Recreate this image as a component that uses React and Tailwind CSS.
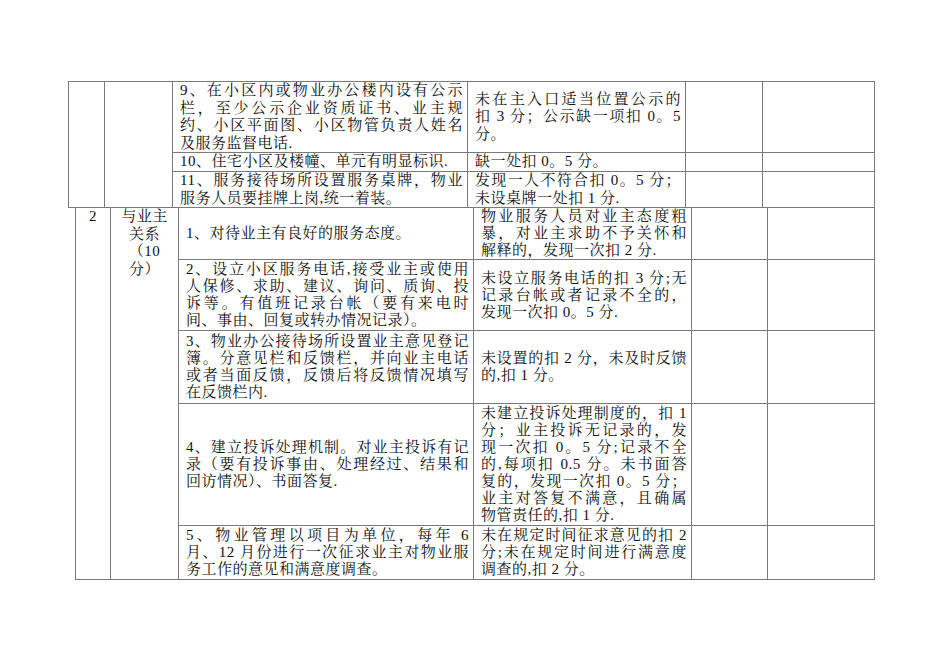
import React from "react";

const FONT = {
  fontFamily: '"Liberation Serif", "Noto Serif CJK SC", "Noto Sans CJK SC", serif',
};

const top = [
  {
    h: "h-[71px]",
    mid: [
      "9、在小区内或物业办公楼内设有公示",
      "栏，至少公示企业资质证书、业主规",
      "约、小区平面图、小区物管负责人姓名",
      "及服务监督电话.",
    ],
    right: ["未在主入口适当位置公示的", "扣 3 分；公示缺一项扣 0。5", "分。"],
  },
  {
    h: "h-[18px]",
    mid: ["10、住宅小区及楼幢、单元有明显标识."],
    right: ["缺一处扣 0。5 分。"],
  },
  {
    h: "h-[36px]",
    mid: ["11、服务接待场所设置服务桌牌，物业", "服务人员要挂牌上岗,统一着装。"],
    right: ["发现一人不符合扣 0。5 分；", "未设桌牌一处扣 1 分."],
  },
];

const bottom = [
  {
    h: "h-[52px]",
    mid: ["1、对待业主有良好的服务态度。"],
    right: ["物业服务人员对业主态度粗", "暴，对业主求助不予关怀和", "解释的，发现一次扣 2 分."],
  },
  {
    h: "h-[71px]",
    mid: [
      "2、设立小区服务电话,接受业主或使用",
      "人保修、求助、建议、询问、质询、投",
      "诉等。有值班记录台帐（要有来电时",
      "间、事由、回复或转办情况记录）。",
    ],
    right: ["未设立服务电话的扣 3 分;无", "记录台帐或者记录不全的，", "发现一次扣 0。5 分."],
  },
  {
    h: "h-[73px]",
    mid: [
      "3、物业办公接待场所设置业主意见登记",
      "簿。分意见栏和反馈栏，并向业主电话",
      "或者当面反馈，反馈后将反馈情况填写",
      "在反馈栏内.",
    ],
    right: ["未设置的扣 2 分，未及时反馈", "的,扣 1 分。"],
  },
  {
    h: "h-[122px]",
    mid: [
      "4、建立投诉处理机制。对业主投诉有记",
      "录（要有投诉事由、处理经过、结果和",
      "回访情况）、书面答复.",
    ],
    right: [
      "未建立投诉处理制度的，扣 1",
      "分；业主投诉无记录的，发",
      "现一次扣 0。5 分;记录不全",
      "的,每项扣 0.5 分。未书面答",
      "复的，发现一次扣 0。5 分；",
      "业主对答复不满意，且确属",
      "物管责任的,扣 1 分.",
    ],
  },
  {
    h: "h-[54px]",
    mid: [
      "5、物业管理以项目为单位，每年 6",
      "月、12 月份进行一次征求业主对物业服",
      "务工作的意见和满意度调查。",
    ],
    right: ["未在规定时间征求意见的扣 2", "分;未在规定时间进行满意度", "调查的,扣 2 分。"],
  },
];

function Lines({ lines }) {
  return lines.map((t, i) => (
    <div
      key={i}
      className={
        i < lines.length - 1 ? "text-justify [text-align-last:justify]" : "text-left"
      }
    >
      {t}
    </div>
  ));
}

const td = "border border-[#7a7a7a] p-0 align-middle";
const txt = `${td} pl-[7px] pr-[4px]`;

export default function App() {
  return (
    <div className="min-h-screen bg-white pl-[68px] pt-[81px] text-[#111]" style={FONT}>
      <div className="text-[15px] leading-[17px] tracking-[0.5px]">
        <table className="w-[806px] table-fixed border-collapse">
          <colgroup>
            <col className="w-[36px]" />
            <col className="w-[68px]" />
            <col className="w-[295px]" />
            <col className="w-[218px]" />
            <col className="w-[77px]" />
            <col className="w-[112px]" />
          </colgroup>
          <tbody>
            {top.map((r, i) => (
              <tr key={i} className={r.h}>
                {i === 0 && <td rowSpan={3} className={td} />}
                {i === 0 && <td rowSpan={3} className={td} />}
                <td className={`${txt} leading-[17.6px]`}>
                  <Lines lines={r.mid} />
                </td>
                <td className={`${txt} leading-[17.6px]`}>
                  <Lines lines={r.right} />
                </td>
                <td className={td} />
                <td className={td} />
              </tr>
            ))}
          </tbody>
        </table>

        <table className="-mt-px ml-[7px] w-[799px] table-fixed border-collapse">
          <colgroup>
            <col className="w-[35px]" />
            <col className="w-[68px]" />
            <col className="w-[295px]" />
            <col className="w-[218px]" />
            <col className="w-[76px]" />
            <col className="w-[107px]" />
          </colgroup>
          <tbody>
            {bottom.map((r, i) => (
              <tr key={i} className={r.h}>
                {i === 0 && (
                  <td rowSpan={5} className={`${td} !align-top text-center leading-[17.6px]`}>
                    2
                  </td>
                )}
                {i === 0 && (
                  <td rowSpan={5} className={`${td} !align-top text-center leading-[17.6px]`}>
                    <div>与业主</div>
                    <div>关系</div>
                    <div>（10</div>
                    <div>分）</div>
                  </td>
                )}
                <td className={txt}>
                  <Lines lines={r.mid} />
                </td>
                <td className={txt}>
                  <Lines lines={r.right} />
                </td>
                <td className={td} />
                <td className={td} />
              </tr>
            ))}
          </tbody>
        </table>
      </div>
    </div>
  );
}
